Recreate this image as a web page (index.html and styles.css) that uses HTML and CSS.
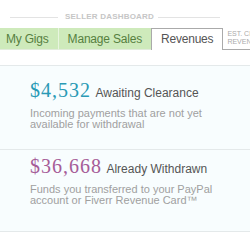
FILE: index.html
```html
<!doctype html>
<html>
  <head>
    <meta charset="utf-8">
    <title>Seller Dashboard - Revenues</title>
    <link rel="stylesheet" href="styles.css">
  </head>
  <body>
    <div class="dash-title">
      <span class="rule rule-left"></span>
      <span class="dash-label">Seller Dashboard</span>
      <span class="rule rule-right"></span>
    </div>

    <div class="tabs">
      <a class="tab tab-first" href="#">My Gigs</a>
      <a class="tab" href="#">Manage Sales</a>
      <a class="tab active" href="#">Revenues</a>
      <div class="tab-est">Est. Cleared<br>Revenues</div>
    </div>

    <div class="summary summary-first">
      <div class="summary-head">
        <span class="amount pending">$4,532</span>
        <span class="summary-name">Awaiting Clearance</span>
      </div>
      <p class="summary-desc">Incoming payments that are not yet available for withdrawal</p>
    </div>

    <div class="summary summary-last">
      <div class="summary-head">
        <span class="amount withdrawn">$36,668</span>
        <span class="summary-name">Already Withdrawn</span>
      </div>
      <p class="summary-desc">Funds you transferred to your PayPal account or Fiverr Revenue Card™</p>
    </div>
  </body>
</html>
```

FILE: styles.css
```css
html, body {
  overflow: hidden;
}
body {
  margin: 0;
  font-family: "Liberation Sans", Arial, sans-serif;
  background: #fff;
}
.dash-title {
  display: flex;
  align-items: center;
  width: 210px;
  height: 10px;
  margin: 12px 0 6px 10px;
}
.rule {
  height: 1px;
  background: #e3e3e3;
}
.rule-left {
  width: 48px;
  margin-right: 7px;
}
.rule-right {
  flex: 1;
  margin-left: 4px;
}
.dash-label {
  font-size: 8px;
  font-weight: bold;
  line-height: 10px;
  text-transform: uppercase;
  letter-spacing: 0.2px;
  color: #c6c6c6;
  white-space: nowrap;
}
.tabs {
  display: flex;
  height: 22px;
  overflow: hidden;
}
.tab {
  display: block;
  padding: 0 9px;
  height: 22px;
  line-height: 22px;
  font-size: 12px;
  letter-spacing: -0.2px;
  color: #56803f;
  background: #ceeabb;
  text-decoration: none;
  white-space: nowrap;
  box-sizing: border-box;
  border-bottom: 1px solid #e2ecdc;
}
.tab + .tab {
  border-left: 1px solid #e8f5df;
}
.tab-first {
  padding-left: 6px;
}
.tab.active {
  background: #fff;
  color: #555;
  border: 1px solid #aaa;
  border-bottom: none;
  line-height: 21px;
}
.tab-est {
  flex: 1;
  min-width: 0;
  padding: 2px 0 0 4px;
  box-sizing: border-box;
  height: 22px;
  border-bottom: 1px solid #aaa;
  font-size: 7px;
  line-height: 7.5px;
  text-transform: uppercase;
  color: #aaa;
  white-space: nowrap;
  overflow: hidden;
}
.summary {
  background: #f8fdfe;
  border-top: 1px solid #e4e9ea;
  padding: 0 30px;
}
.summary-first {
  margin-top: 15px;
  padding-top: 12px;
  padding-bottom: 19px;
}
.summary-last {
  padding-top: 4px;
  padding-bottom: 25px;
  border-bottom: 1px solid #e4e9ea;
}
.summary-head {
  line-height: 24px;
  white-space: nowrap;
}
.amount {
  font-family: "Liberation Serif", Georgia, serif;
  font-size: 20px;
  letter-spacing: 1px;
}
.amount.pending {
  color: #2a9ab5;
}
.amount.withdrawn {
  color: #a65c98;
}
.summary-name {
  font-size: 12px;
  color: #555;
}
.summary-desc {
  margin: 3px 0 0;
  font-size: 11px;
  line-height: 11px;
  color: #a0a0a0;
}
```
